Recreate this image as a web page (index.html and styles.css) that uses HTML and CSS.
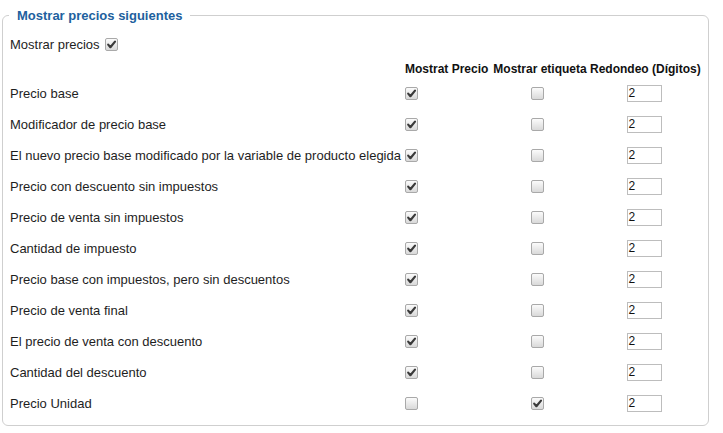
FILE: index.html
```html
<!DOCTYPE html>
<html lang="es">
<head>
<meta charset="utf-8">
<title>Mostrar precios</title>
<link rel="stylesheet" href="styles.css">
</head>
<body>
<fieldset class="panel">
  <legend class="panel-title">Mostrar precios siguientes</legend>
  <div class="show-row">
    <span class="show-label">Mostrar precios</span>
    <span class="cb checked"><svg viewBox="0 0 11 11"><path d="M2.2 5.6 L4.4 8.2 L9 2.6" fill="none" stroke="#3a3a3a" stroke-width="2.2" stroke-linecap="round" stroke-linejoin="round"/></svg></span>
  </div>
  <table class="prices">
    <colgroup>
      <col class="c-label"><col class="c-show"><col class="c-tag"><col class="c-round">
    </colgroup>
    <thead>
      <tr>
        <th></th>
        <th class="h-left">Mostrat Precio</th>
        <th>Mostrar etiqueta</th>
        <th>Redondeo (Dígitos)</th>
      </tr>
    </thead>
    <tbody>
      <tr><td>Precio base</td><td class="left"><span class="cb checked"><svg viewBox="0 0 11 11"><path d="M2.2 5.6 L4.4 8.2 L9 2.6" fill="none" stroke="#3a3a3a" stroke-width="2.2" stroke-linecap="round" stroke-linejoin="round"/></svg></span></td><td class="mid"><span class="cb"></span></td><td class="mid"><span class="num">2</span></td></tr>
      <tr><td>Modificador de precio base</td><td class="left"><span class="cb checked"><svg viewBox="0 0 11 11"><path d="M2.2 5.6 L4.4 8.2 L9 2.6" fill="none" stroke="#3a3a3a" stroke-width="2.2" stroke-linecap="round" stroke-linejoin="round"/></svg></span></td><td class="mid"><span class="cb"></span></td><td class="mid"><span class="num">2</span></td></tr>
      <tr><td>El nuevo precio base modificado por la variable de producto elegida</td><td class="left"><span class="cb checked"><svg viewBox="0 0 11 11"><path d="M2.2 5.6 L4.4 8.2 L9 2.6" fill="none" stroke="#3a3a3a" stroke-width="2.2" stroke-linecap="round" stroke-linejoin="round"/></svg></span></td><td class="mid"><span class="cb"></span></td><td class="mid"><span class="num">2</span></td></tr>
      <tr><td>Precio con descuento sin impuestos</td><td class="left"><span class="cb checked"><svg viewBox="0 0 11 11"><path d="M2.2 5.6 L4.4 8.2 L9 2.6" fill="none" stroke="#3a3a3a" stroke-width="2.2" stroke-linecap="round" stroke-linejoin="round"/></svg></span></td><td class="mid"><span class="cb"></span></td><td class="mid"><span class="num">2</span></td></tr>
      <tr><td>Precio de venta sin impuestos</td><td class="left"><span class="cb checked"><svg viewBox="0 0 11 11"><path d="M2.2 5.6 L4.4 8.2 L9 2.6" fill="none" stroke="#3a3a3a" stroke-width="2.2" stroke-linecap="round" stroke-linejoin="round"/></svg></span></td><td class="mid"><span class="cb"></span></td><td class="mid"><span class="num">2</span></td></tr>
      <tr><td>Cantidad de impuesto</td><td class="left"><span class="cb checked"><svg viewBox="0 0 11 11"><path d="M2.2 5.6 L4.4 8.2 L9 2.6" fill="none" stroke="#3a3a3a" stroke-width="2.2" stroke-linecap="round" stroke-linejoin="round"/></svg></span></td><td class="mid"><span class="cb"></span></td><td class="mid"><span class="num">2</span></td></tr>
      <tr><td>Precio base con impuestos, pero sin descuentos</td><td class="left"><span class="cb checked"><svg viewBox="0 0 11 11"><path d="M2.2 5.6 L4.4 8.2 L9 2.6" fill="none" stroke="#3a3a3a" stroke-width="2.2" stroke-linecap="round" stroke-linejoin="round"/></svg></span></td><td class="mid"><span class="cb"></span></td><td class="mid"><span class="num">2</span></td></tr>
      <tr><td>Precio de venta final</td><td class="left"><span class="cb checked"><svg viewBox="0 0 11 11"><path d="M2.2 5.6 L4.4 8.2 L9 2.6" fill="none" stroke="#3a3a3a" stroke-width="2.2" stroke-linecap="round" stroke-linejoin="round"/></svg></span></td><td class="mid"><span class="cb"></span></td><td class="mid"><span class="num">2</span></td></tr>
      <tr><td>El precio de venta con descuento</td><td class="left"><span class="cb checked"><svg viewBox="0 0 11 11"><path d="M2.2 5.6 L4.4 8.2 L9 2.6" fill="none" stroke="#3a3a3a" stroke-width="2.2" stroke-linecap="round" stroke-linejoin="round"/></svg></span></td><td class="mid"><span class="cb"></span></td><td class="mid"><span class="num">2</span></td></tr>
      <tr><td>Cantidad del descuento</td><td class="left"><span class="cb checked"><svg viewBox="0 0 11 11"><path d="M2.2 5.6 L4.4 8.2 L9 2.6" fill="none" stroke="#3a3a3a" stroke-width="2.2" stroke-linecap="round" stroke-linejoin="round"/></svg></span></td><td class="mid"><span class="cb"></span></td><td class="mid"><span class="num">2</span></td></tr>
      <tr><td>Precio Unidad</td><td class="left"><span class="cb"></span></td><td class="mid"><span class="cb checked"><svg viewBox="0 0 11 11"><path d="M2.2 5.6 L4.4 8.2 L9 2.6" fill="none" stroke="#3a3a3a" stroke-width="2.2" stroke-linecap="round" stroke-linejoin="round"/></svg></span></td><td class="mid"><span class="num">2</span></td></tr>
    </tbody>
  </table>
</fieldset>
</body>
</html>
```

FILE: styles.css
```css
html, body {
  margin: 0;
  padding: 0;
  background: #ffffff;
}
body {
  font-family: "Liberation Sans", Arial, sans-serif;
  font-size: 13px;
  color: #1e1e1e;
}
.panel {
  margin: 8px 14px 0 2px;
  padding: 0 0 6px 7px;
  border: 1px solid #cfcfcf;
  border-radius: 6px;
  min-width: 0;
}
.panel-title {
  margin-left: -1px;
  padding: 0 8px;
  font-weight: bold;
  font-size: 13px;
  line-height: 15px;
  color: #215f9e;
}
.show-row {
  display: flex;
  align-items: center;
  gap: 5px;
  height: 17px;
  margin-top: 13px;
}
.show-label {
  line-height: 17px;
}
.cb {
  display: inline-block;
  box-sizing: border-box;
  width: 13px;
  height: 13px;
  border: 1px solid #a9a9a9;
  border-radius: 2px;
  background: linear-gradient(#fbfbfb, #d9d9d9);
  vertical-align: middle;
}
.cb svg {
  display: block;
  width: 11px;
  height: 11px;
}
.prices {
  border-collapse: collapse;
  table-layout: fixed;
  width: 690px;
  margin-top: 6px;
}
.c-label { width: 395px; }
.c-show { width: 85px; }
.c-tag { width: 100px; }
.c-round { width: 110px; }
.prices th {
  font-size: 12px;
  font-weight: bold;
  color: #111111;
  height: 18px;
  padding: 1px 0 0 0;
  text-align: center;
  white-space: nowrap;
  vertical-align: middle;
}
.prices th.h-left {
  text-align: left;
}
.prices td {
  height: 31px;
  padding: 0;
  white-space: nowrap;
  vertical-align: middle;
}
.prices td.left {
  text-align: left;
}
.prices td.mid {
  text-align: center;
}
.prices td .cb {
  display: block;
}
.prices td.mid .cb {
  margin: 0 auto;
  position: relative;
  left: -3px;
}
.num {
  display: block;
  box-sizing: border-box;
  width: 35px;
  height: 17px;
  margin: 0 auto;
  border: 1px solid #bdbdbd;
  font-size: 12px;
  line-height: 15px;
  padding-left: 1px;
  text-align: left;
  color: #111111;
  position: relative;
  left: -1px;
}
```
